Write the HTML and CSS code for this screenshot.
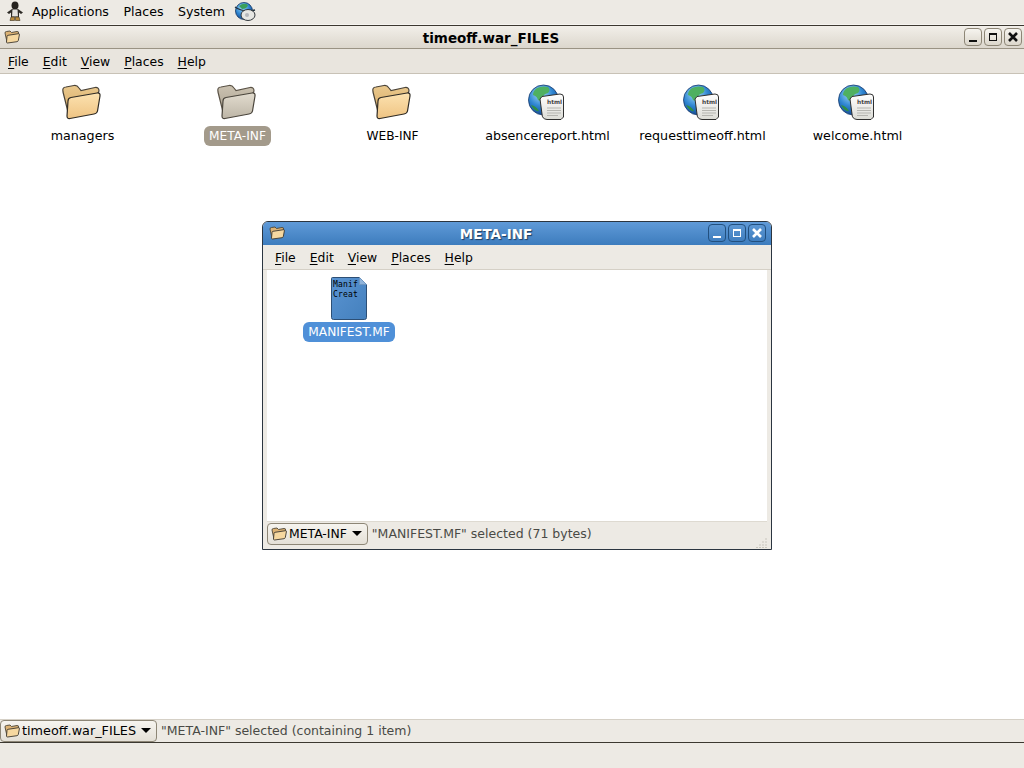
FILE: index.html
```html
<!DOCTYPE html>
<html lang="en">
<head>
<meta charset="utf-8">
<title>timeoff.war_FILES</title>
<link rel="stylesheet" href="styles.css">
</head>
<body>
<svg class="defs" width="0" height="0" aria-hidden="true">
  <defs>
    <linearGradient id="fb" x1="0" y1="0" x2="0" y2="1"><stop offset="0" stop-color="#eac98e"/><stop offset="1" stop-color="#d6a860"/></linearGradient>
    <linearGradient id="ff" x1="0" y1="0" x2="0" y2="1"><stop offset="0" stop-color="#fce2b0"/><stop offset="1" stop-color="#efc483"/></linearGradient>
    <linearGradient id="gb" x1="0" y1="0" x2="0" y2="1"><stop offset="0" stop-color="#cbc2b1"/><stop offset="1" stop-color="#a89f8e"/></linearGradient>
    <linearGradient id="gf" x1="0" y1="0" x2="0" y2="1"><stop offset="0" stop-color="#e2dccf"/><stop offset="1" stop-color="#bdb5a6"/></linearGradient>
    <radialGradient id="globe" cx="0.4" cy="0.3" r="0.8"><stop offset="0" stop-color="#a5dcf8"/><stop offset="0.5" stop-color="#2f86d2"/><stop offset="1" stop-color="#0e3a80"/></radialGradient>
    <linearGradient id="doc" x1="0" y1="0" x2="1" y2="1"><stop offset="0" stop-color="#5a94d2"/><stop offset="1" stop-color="#4480bd"/></linearGradient>
    <linearGradient id="pg" x1="0" y1="0" x2="0" y2="1"><stop offset="0" stop-color="#ffffff"/><stop offset="1" stop-color="#dcdcd6"/></linearGradient>
    <symbol id="folder" viewBox="0 0 40 36">
      <path d="M2 8 Q1 3 5 3 L13 1.500 Q16 1 18 4 L20 6.500 L34 3.500 Q38 3 38 7 L36 12 L8 32 Z" fill="url(#fb)" stroke="#4a4338" stroke-width="1.200"/>
      <path d="M7 17 Q7 14 10 13.500 L36 9 Q39.500 8.500 39 12 L36.500 27 Q36 29.500 33 30 L9 34.500 Q6 35 6 32 Z" fill="url(#ff)" stroke="#2f2b24" stroke-width="1.200"/>
    </symbol>
    <symbol id="folder-dim" viewBox="0 0 40 36">
      <path d="M2 8 Q1 3 5 3 L13 1.500 Q16 1 18 4 L20 6.500 L34 3.500 Q38 3 38 7 L36 12 L8 32 Z" fill="url(#gb)" stroke="#5a5246" stroke-width="1.200"/>
      <path d="M7 17 Q7 14 10 13.500 L36 9 Q39.500 8.500 39 12 L36.500 27 Q36 29.500 33 30 L9 34.500 Q6 35 6 32 Z" fill="url(#gf)" stroke="#4a453c" stroke-width="1.200"/>
    </symbol>
    <symbol id="folder-s" viewBox="0 0 16 14">
      <path d="M1 3 Q1 1.500 2.500 1.500 L6 1 L7.500 2.500 L13 1.500 Q15 1.500 14.500 3 L14 7 L3 12 Z" fill="#dcb274" stroke="#4b4436" stroke-width="0.900"/>
      <path d="M3 6.500 Q3 5.500 4 5.300 L14.500 3.700 Q15.700 3.600 15.400 4.800 L14.300 10.500 Q14 11.500 13 11.700 L3.500 13 Q2.500 13 2.500 12 Z" fill="#f6d8a0" stroke="#3d382f" stroke-width="0.900"/>
    </symbol>
    <symbol id="html" viewBox="0 0 36 36">
      <circle cx="15.500" cy="16" r="15" fill="url(#globe)" stroke="#16396b" stroke-width="0.800"/>
      <path d="M9 4 Q14 1.500 20 3 Q23 6 20 9 Q15 10 15 14 Q13 18 10 16 Q9 12 5 11 Q5 7 9 4 Z" fill="#4fb060"/>
      <path d="M3 21 Q8 22 11 27 Q7 28 3 21 Z" fill="#2f8f42"/>
      <path d="M12 15 L14 12.500 L32 10 Q35.500 10 35.500 13 L35.500 33 L33 35.500 L19 35.500 Q14 35 14 30 Z" fill="url(#pg)" stroke="#2f2f2f" stroke-width="1"/>
      <text x="19" y="20" class="html-tag">html</text>
      <path d="M19 24 H33 M19 26.500 H33 M19 29 H33 M19 31.500 H30" stroke="#b5b5b0" stroke-width="1" fill="none"/>
    </symbol>
  </defs>
</svg>

<header class="panel">
  <svg class="panel-foot" width="18" height="21" viewBox="0 0 18 21" aria-hidden="true">
    <ellipse cx="9" cy="4.500" rx="3.500" ry="4" fill="#26231f"/>
    <path d="M6 8 H12 L17 11.500 L15 13 L13 11.500 L13 16 H5 L5 11.500 L3 13 L1 11.500 Z" fill="#2d2a26"/>
    <path d="M6.500 8.500 H11.500 L12 15.500 H6 Z" fill="#e4e2dd"/>
    <path d="M5 16 H8.500 V19.500 H4 Z M9.500 16 H13 L14 19.500 H9.500 Z" fill="#b98a3c" stroke="#3a3020" stroke-width="0.600"/>
  </svg>
  <span class="panel-item">Applications</span>
  <span class="panel-item">Places</span>
  <span class="panel-item">System</span>
  <svg class="panel-globe" width="22" height="20" viewBox="0 0 22 20" aria-hidden="true">
    <circle cx="10" cy="9" r="8.500" fill="url(#globe)" stroke="#12335f" stroke-width="0.800"/>
    <path d="M5 4 Q10 0 14 3 Q13 7 8 7 Z" fill="#3aa05a"/>
    <path d="M1 5 Q10 11 21 8" fill="none" stroke="#20303c" stroke-width="1.400"/>
    <ellipse cx="14" cy="13" rx="7" ry="5.500" fill="#e6e6e2" stroke="#33383c" stroke-width="1"/>
    <circle cx="13" cy="13" r="2" fill="#b5b8bb"/>
  </svg>
</header>

<section class="main-window">
  <div class="titlebar">
    <svg class="title-icon" width="16" height="14"><use href="#folder-s"/></svg>
    <span class="title">timeoff.war_FILES</span>
    <div class="wm-buttons">
      <span class="wm"><i class="g-min"></i></span>
      <span class="wm"><i class="g-max"></i></span>
      <span class="wm"><svg class="g-close" width="12" height="12" viewBox="0 0 12 12" aria-hidden="true"><path d="M2 2 L10 10 M10 2 L2 10"/></svg></span>
    </div>
  </div>
  <nav class="menubar">
    <span class="menu"><u>F</u>ile</span>
    <span class="menu"><u>E</u>dit</span>
    <span class="menu"><u>V</u>iew</span>
    <span class="menu"><u>P</u>laces</span>
    <span class="menu"><u>H</u>elp</span>
  </nav>
  <div class="canvas">
    <div class="grid">
      <div class="item"><svg class="ic-folder"><use href="#folder"/></svg><span class="label">managers</span></div>
      <div class="item"><svg class="ic-folder"><use href="#folder-dim"/></svg><span class="label caps label-dim">META-INF</span></div>
      <div class="item"><svg class="ic-folder"><use href="#folder"/></svg><span class="label caps">WEB-INF</span></div>
      <div class="item"><svg class="ic-html"><use href="#html"/></svg><span class="label">absencereport.html</span></div>
      <div class="item"><svg class="ic-html"><use href="#html"/></svg><span class="label">requesttimeoff.html</span></div>
      <div class="item"><svg class="ic-html"><use href="#html"/></svg><span class="label">welcome.html</span></div>
    </div>
  </div>
  <footer class="status">
    <span class="crumb"><svg class="crumb-icon" width="16" height="14"><use href="#folder-s"/></svg>timeoff.war_FILES<i class="arrow"></i></span>
    <span class="status-text">"META-INF" selected (containing 1 item)</span>
  </footer>
</section>

<div class="bottom-panel"></div>

<section class="dialog">
  <div class="d-title">
    <svg class="title-icon" width="16" height="14"><use href="#folder-s"/></svg>
    <span class="d-title-text">META-INF</span>
    <div class="wm-buttons d-buttons">
      <span class="wm wm-blue"><i class="g-min"></i></span>
      <span class="wm wm-blue"><i class="g-max"></i></span>
      <span class="wm wm-blue"><svg class="g-close" width="12" height="12" viewBox="0 0 12 12" aria-hidden="true"><path d="M2 2 L10 10 M10 2 L2 10"/></svg></span>
    </div>
  </div>
  <div class="d-body">
    <nav class="menubar d-menubar">
      <span class="menu"><u>F</u>ile</span>
      <span class="menu"><u>E</u>dit</span>
      <span class="menu"><u>V</u>iew</span>
      <span class="menu"><u>P</u>laces</span>
      <span class="menu"><u>H</u>elp</span>
    </nav>
    <div class="d-canvas">
      <div class="file">
        <div class="doc">
          <svg class="doc-shape" width="36" height="43" viewBox="0 0 36 43" aria-hidden="true">
            <path d="M0.500 1.500 Q0.500 0.500 1.500 0.500 L28.500 0.500 L35.500 7.500 L35.500 40.500 Q35.500 42.500 33.500 42.500 L2.500 42.500 Q0.500 42.500 0.500 40.500 Z" fill="url(#doc)" stroke="#2d4f75"/>
            <path d="M28.500 0.500 V7.500 H35.500 Z" fill="#8fb3da" stroke="#6f96c0"/>
          </svg>
          <span class="doc-text">Manif<br>Creat</span>
        </div>
        <span class="label label-sel">MANIFEST.MF</span>
      </div>
    </div>
    <footer class="d-status">
      <span class="crumb d-crumb"><svg class="crumb-icon" width="16" height="14"><use href="#folder-s"/></svg>META-INF<i class="arrow"></i></span>
      <span class="status-text">"MANIFEST.MF" selected (71 bytes)</span>
      <svg class="grip" width="11" height="11" viewBox="0 0 11 11" aria-hidden="true">
        <path d="M9.500 1.500h1v1h-1zM6.500 4.500h1v1h-1zM9.500 4.500h1v1h-1zM3.500 7.500h1v1h-1zM6.500 7.500h1v1h-1zM9.500 7.500h1v1h-1zM0.500 10h1v1h-1zM3.500 10h1v1h-1zM6.500 10h1v1h-1zM9.500 10h1v1h-1z" fill="#a8a396"/>
      </svg>
    </footer>
  </div>
</section>
</body>
</html>
```
FILE: styles.css
```css
* { box-sizing: border-box; }
html, body { margin: 0; padding: 0; }
body {
  width: 1024px;
  height: 768px;
  overflow: hidden;
  position: relative;
  display: flex;
  flex-direction: column;
  background: #ffffff;
  color: #000000;
  font-family: "DejaVu Sans", sans-serif;
  font-size: 12.7px;
  line-height: 16px;
}
.defs { position: absolute; }
.html-tag { font-family: "DejaVu Sans", sans-serif; font-size: 5.800px; font-weight: 700; fill: #444; }
u { text-decoration-thickness: 1px; text-underline-offset: 2px; }

.panel {
  height: 26px;
  flex: none;
  display: flex;
  align-items: center;
  padding: 0 0 2px 6px;
  background: #edeae4;
  border-bottom: 1px solid #3c3830;
  box-shadow: inset 0 -1px 0 #f7f5f1;
}
.panel-foot { margin-right: 8px; }
.panel-item { font-size: 12.6px; margin-right: 14.500px; }
.panel-globe { margin-left: -5px; }

.main-window { flex: 1; display: flex; flex-direction: column; min-height: 0; }
.titlebar {
  height: 23px;
  flex: none;
  position: relative;
  display: flex;
  align-items: center;
  justify-content: center;
  padding: 1px 42px 0 0;
  background: linear-gradient(#f2efe9, #dcd7cd);
  border-bottom: 1px solid #9a9384;
}
.title-icon { position: absolute; left: 4px; top: 4px; }
.title { font-weight: 700; font-size: 13.500px; }
.wm-buttons { position: absolute; right: 2px; top: 2px; display: flex; gap: 2px; }
.wm {
  width: 18px;
  height: 18px;
  display: flex;
  align-items: center;
  justify-content: center;
  border: 1px solid #8d8676;
  border-radius: 4px;
  background: linear-gradient(#f6f4ef, #dcd7cc);
  color: #111;
}
.g-min { display: block; width: 8px; height: 2px; background: currentColor; margin-top: 7px; }
.g-max { display: block; width: 8px; height: 8px; border: 1px solid currentColor; border-top-width: 2px; }
.g-close { display: block; fill: none; stroke: currentColor; stroke-width: 2.600; }

.menubar {
  height: 25px;
  flex: none;
  display: flex;
  align-items: center;
  padding: 1px 0 0 8px;
  gap: 14px;
  font-size: 12.4px;
  background: #e9e5de;
  border-bottom: 1px solid #c8c2b6;
}

.canvas { flex: 1; background: #fff; min-height: 0; padding-left: 5px; }
.grid { display: grid; grid-template-columns: repeat(6, 155px); padding-top: 9px; }
.item { display: flex; flex-direction: column; align-items: center; }
.ic-folder { width: 40px; height: 36px; margin: 1px 4px 6px 0; }
.ic-html { width: 36px; height: 36px; margin: 1px 3px 6px 0; }
.label { padding: 2px 5px; border-radius: 6px; line-height: 16px; }
.caps { font-size: 12.2px; }
.label-dim { background: #a39a8b; color: #fff; }
.label-sel { background: #4f90d8; color: #fff; font-size: 12.200px; }

.status {
  height: 24px;
  flex: none;
  display: flex;
  align-items: center;
  background: #edeae4;
  border-top: 1px solid #d5d0c6;
  border-bottom: 1px solid #3c3830;
  font-size: 12.5px;
}
.crumb {
  height: 22px;
  display: flex;
  align-items: center;
  padding: 0 4px 0 3px;
  border: 1px solid #8d8676;
  border-radius: 4px;
  background: linear-gradient(#f6f4ef, #e4e0d7);
  font-size: 12.800px;
}
.crumb-icon { margin-right: 2px; flex: none; }
.arrow {
  width: 0;
  height: 0;
  margin-left: 5px;
  margin-right: 1px;
  margin-top: -2px;
  border-left: 5px solid transparent;
  border-right: 5px solid transparent;
  border-top: 5px solid #000;
}
.status-text { margin-left: 4px; color: #4a4a46; }

.bottom-panel { height: 25px; flex: none; background: #edeae4; }

.dialog {
  position: absolute;
  left: 262px;
  top: 221px;
  width: 510px;
  height: 329px;
  display: flex;
  flex-direction: column;
  border: 1px solid #2b3540;
  border-radius: 6px 6px 0 0;
  background: #edeae4;
}
.d-title {
  height: 23px;
  flex: none;
  position: relative;
  display: flex;
  align-items: center;
  justify-content: center;
  padding-right: 42px;
  border-radius: 5px 5px 0 0;
  background: linear-gradient(#5f9ad8, #3d7cbd);
}
.d-title .title-icon { left: 6px; top: 4px; }
.d-title-text { font-weight: 700; font-size: 13.500px; color: #fff; text-shadow: 1px 1px 1px #1f3d60; }
.d-buttons { right: 5px; top: 2px; }
.wm-blue {
  border-color: #22507f;
  background: linear-gradient(#5d97d3, #3f7ebf);
  color: #fff;
}
.d-body { flex: 1; display: flex; flex-direction: column; min-height: 0; padding: 0 4px; }
.d-menubar { background: #edeae4; margin: 0 -4px; padding-left: 12px; border-bottom: 1px solid #d5d0c6; }
.d-canvas { flex: 1; min-height: 0; background: #fff; padding-top: 7px; padding-left: 37px; border-bottom: 1px solid #dedad1; }
.file { width: 90px; display: flex; flex-direction: column; align-items: center; }
.doc { position: relative; width: 36px; height: 43px; margin-bottom: 2px; }
.doc-shape { display: block; }
.doc-text {
  position: absolute;
  left: 2px;
  top: 3px;
  font-family: "DejaVu Sans Mono", monospace;
  font-size: 8px;
  letter-spacing: 0.200px;
  line-height: 10px;
  color: #000;
}
.d-status { height: 27px; flex: none; display: flex; align-items: flex-start; padding-top: 1px; position: relative; font-size: 12.5px; }
.d-status .crumb { font-size: 12.400px; }
.d-status .status-text { margin-left: 4px; margin-top: 3px; }
.grip { position: absolute; right: 0; bottom: 1px; }
```
